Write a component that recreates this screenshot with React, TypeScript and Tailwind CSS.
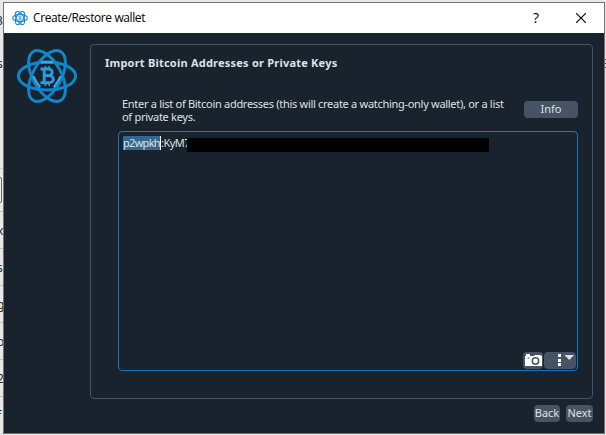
import clsx from "clsx"

const backgroundRows = ["x", "s", "g", "o", "2", "f"]

const WalletLogo = ({
  className,
  strokeWidth = 3,
}: {
  className?: string
  strokeWidth?: number
}) => {
  return (
    <svg viewBox="0 0 62 58" className={className} fill="none">
      <g stroke="#0f86cb" strokeWidth={strokeWidth}>
        <ellipse cx="31" cy="29" rx="28.6" ry="14" />
        <ellipse
          cx="31"
          cy="29"
          rx="28"
          ry="14.2"
          transform="rotate(61 31 29)"
        />
        <ellipse
          cx="31"
          cy="29"
          rx="28"
          ry="14.2"
          transform="rotate(-61 31 29)"
        />
      </g>
      <path d="M25 15.2h12" stroke="#38a9e4" strokeWidth="2.6" />
      <path
        d="M17.3 29q2.6 6 7 11.4M44.7 29q-2.6 6 -7 11.4"
        stroke="#38a9e4"
        strokeWidth="2.2"
      />
      <g stroke="#2b9bdc" strokeWidth="3">
        <path d="M24.5 22h8.2c4.6 0 4.6 6.6 0 6.6h-4.2M32.5 28.6c6.4 0 6.4 7.2 0 7.2h-8M28.2 22v13.8" />
        <path d="M29.4 19v3M33.2 19v3M29.4 36v3M33.2 36v3" strokeWidth="1.6" />
      </g>
    </svg>
  )
}

const Button = ({
  className,
  children,
}: {
  className?: string
  children: React.ReactNode
}) => (
  <button
    className={clsx(
      "flex h-[17px] items-center justify-center rounded-[4px] bg-[#455364]",
      className
    )}
  >
    {children}
  </button>
)

const TitleBar = () => (
  <header className="flex h-[30px] shrink-0 items-center bg-white pl-2 text-black">
    <WalletLogo className="h-4 w-4" strokeWidth={4} />
    <span className="ml-[5px] font-['Open_Sans','Noto_Sans',sans-serif] text-[12px] leading-4 tracking-[-0.4px]">
      Create/Restore wallet
    </span>
    <span className="mr-[37px] ml-auto font-['Open_Sans','Noto_Sans',sans-serif] text-[14px] leading-4">
      ?
    </span>
    <svg
      viewBox="0 0 10 10"
      className="mr-[18px] h-[10px] w-[10px]"
      stroke="black"
      strokeWidth="1.1"
    >
      <path d="M0 0l10 10M10 0L0 10" />
    </svg>
  </header>
)

const App = () => {
  return (
    <div className="flex h-[435px] w-[606px] overflow-hidden bg-[#e8e8e8] font-['Noto_Sans',sans-serif] text-[11px] text-[#dfe1e2]">
      <div className="flex w-[3px] shrink-0 flex-col overflow-hidden text-[12px] leading-4 text-[#2a2a3a]">
        <div className="flex h-[168px] flex-col gap-[27px] pt-[13px]">
          <span className="-ml-[4px]">3</span>
          <span className="-ml-[3px]">s</span>
        </div>
        <div className="h-[43px] border-t border-[#c8c8c8] pt-2">
          <div className="-ml-2 h-[26px] w-[10px] rounded-[2px] border border-[#666] bg-[#eee]" />
        </div>
        {backgroundRows.map((text, i) => (
          <div
            key={i}
            className="flex h-[37px] shrink-0 items-center border-t border-[#c4c4c4] pt-px"
          >
            <span className="-ml-[3px]">{text}</span>
          </div>
        ))}
      </div>

      <div className="mt-[2px] flex h-[432px] w-[602px] shrink-0 flex-col border border-[#707070] bg-[#19232d]">
        <TitleBar />
        <div className="flex h-[368px] shrink-0 pt-[11px]">
          <WalletLogo className="mt-[3px] ml-3 h-[58px] w-[62px] shrink-0" />
          <section className="ml-3 flex h-[355px] w-[503px] shrink-0 flex-col rounded-[4px] border border-[#455364]">
            <h1 className="mt-[10px] ml-[14px] text-[11px] leading-4 font-bold tracking-[0.22px] whitespace-nowrap">
              Import Bitcoin Addresses or Private Keys
            </h1>
            <div className="mt-[26px] flex h-[34px] pl-[31px]">
              <p className="w-[402px] leading-[13px] tracking-[-0.29px] whitespace-nowrap">
                Enter a list of Bitcoin addresses (this will create a
                watching-only wallet), or a list
                <br />
                of private keys.
              </p>
              <Button className="mt-[4px] w-[54px]">Info</Button>
            </div>
            <div className="ml-[27px] flex h-[240px] w-[460px] flex-col justify-between rounded-[4px] border border-[#1a72bb]">
              <div className="flex pt-[4px] pl-[4px] leading-[14px]">
                <span className="h-[14px] w-[37px] bg-[#346792] tracking-[-0.7px] whitespace-nowrap">
                  p2wpkh
                </span>
                <span className="h-[14px] w-px bg-white" />
                <span className="w-[26px] overflow-hidden tracking-[-0.5px]">
                  :KyM7
                </span>
                <span className="mt-[2px] h-[14px] w-[302px] bg-black" />
              </div>
              <div className="flex justify-end gap-px pr-px pb-px">
                <Button className="w-5">
                  <svg viewBox="0 0 17 13" className="h-[13px] w-[17px]">
                    <path
                      d="M0 2h1V0h4v2h4l1-1h5l2 1v10H0z"
                      fill="white"
                    />
                    <circle
                      cx="10.5"
                      cy="7"
                      r="3.2"
                      fill="white"
                      stroke="#455364"
                      strokeWidth="1.5"
                    />
                    <path d="M2.5 4h2" stroke="#455364" />
                  </svg>
                </Button>
                <Button className="w-8">
                  <svg viewBox="0 0 32 17" className="h-[17px] w-8" fill="white">
                    <path d="M14 2h3v3h-3zM14 7h3v3h-3zM14 11h3v3h-3z" />
                    <path d="M20.5 3h9.5l-4.75 5z" fill="#dfe1e2" />
                  </svg>
                </Button>
              </div>
            </div>
          </section>
        </div>
        <footer className="flex justify-end gap-[6px] pt-[4px] pr-[11px]">
          <Button className="w-[26px]">Back</Button>
          <Button className="w-[27px]">Next</Button>
        </footer>
      </div>
      <div className="flex w-px flex-col gap-[3px] pt-[59px]">
        <span className="h-px bg-[#444]" />
        <span className="h-px bg-[#444]" />
        <span className="h-px bg-[#444]" />
      </div>
    </div>
  )
}

export default App
